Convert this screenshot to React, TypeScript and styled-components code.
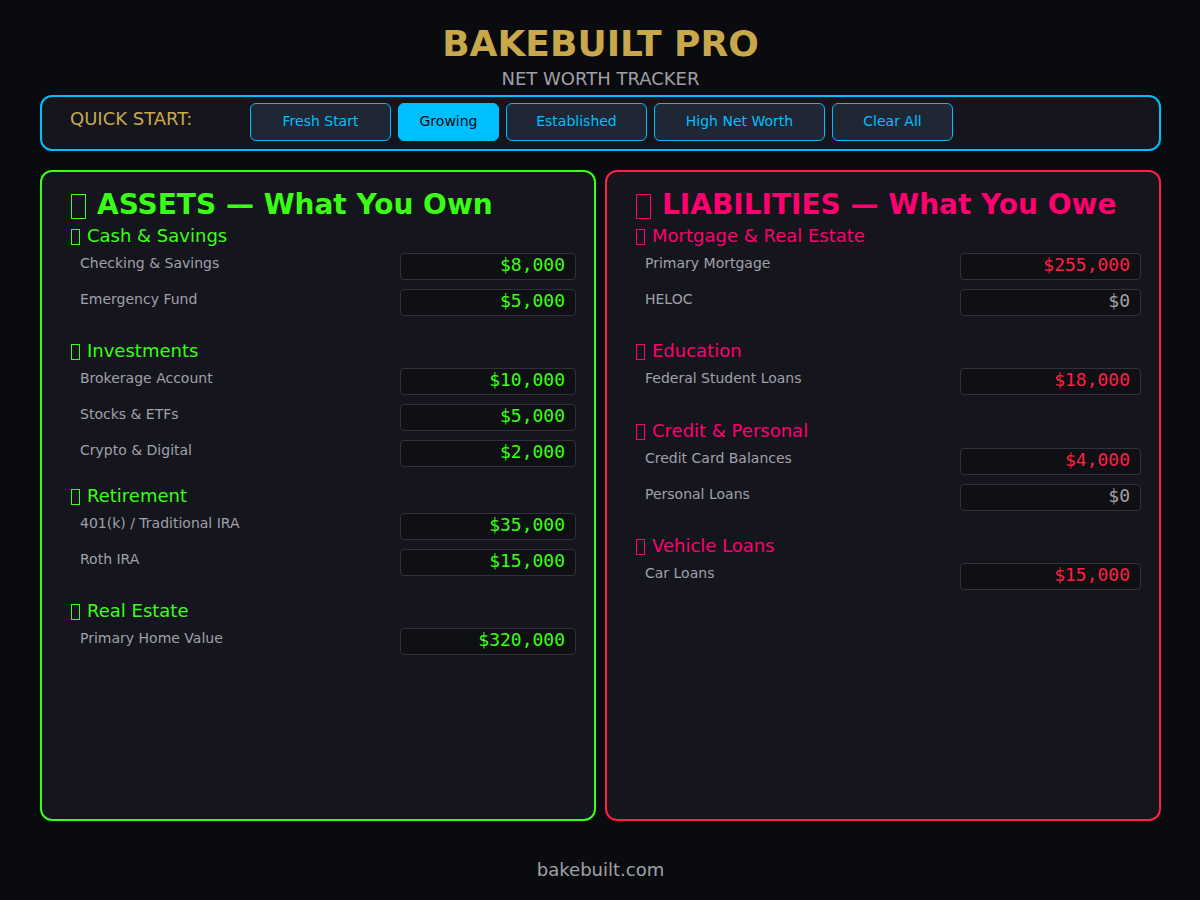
import React, { useState } from "react";
import styled, { createGlobalStyle } from "styled-components";

const GlobalStyle = createGlobalStyle`
  *, *::before, *::after { box-sizing: border-box; }
  body {
    margin: 0;
    background: #0a0b0e;
    color: #a0a0aa;
    font-family: "DejaVu Sans", sans-serif;
  }
`;

const Page = styled.div`
  display: flex;
  flex-direction: column;
  min-height: 100vh;
  padding: 20px 39px 18px 40px;
`;

const Header = styled.header`
  display: flex;
  flex-direction: column;
  align-items: center;
  padding-bottom: 6px;
`;

const Title = styled.h1`
  margin: 0;
  font-size: 36px;
  line-height: 48px;
  color: #c9a84c;
`;

const Subtitle = styled.p`
  margin: 0;
  font-size: 18px;
  line-height: 21px;
`;

const QuickBar = styled.nav`
  display: flex;
  align-items: flex-start;
  min-height: 56px;
  padding: 6px 28px;
  background: #15151e;
  border: 2px solid #00bfff;
  border-radius: 12px;
`;

const QuickLabel = styled.span`
  flex: 0 0 180px;
  font-size: 18px;
  line-height: 32px;
  color: #c9a84c;
`;

const QuickButtons = styled.div`
  display: flex;
  gap: 7px;
`;

const widths = { small: "101px", narrow: "121px", medium: "141px", large: "171px" };

const QuickButton = styled.button<{ $size: keyof typeof widths; $active: boolean }>`
  width: ${(p) => widths[p.$size]};
  height: 38px;
  padding: 0 0 2px;
  border: 1px solid #00bfff;
  border-radius: 6px;
  background: ${(p) => (p.$active ? "#00bfff" : "#1f2735")};
  color: ${(p) => (p.$active ? "#0a0b0e" : "#00bfff")};
  font-family: inherit;
  font-size: 14px;
  cursor: pointer;
`;

const Panels = styled.main`
  display: grid;
  grid-template-columns: 1fr 1fr;
  flex: 1;
  gap: 9px;
  margin-top: 19px;
`;

const Panel = styled.section<{ $border: string; $accent: string; $value: string }>`
  --accent: ${(p) => p.$accent};
  --value: ${(p) => p.$value};
  padding: 16px 18px 16px 28px;
  background: #15151e;
  border: 2px solid ${(p) => p.$border};
  border-radius: 12px;
`;

const PanelTitle = styled.h2`
  display: flex;
  margin: 0;
  font-size: 28px;
  line-height: 34px;
  white-space: nowrap;
  color: var(--accent);
`;

const groupGaps: Record<number, number> = { 1: 14, 2: 13, 3: 7 };

const Group = styled.fieldset<{ $rows: number }>`
  min-width: 0;
  margin: 0 0 ${(p) => groupGaps[p.$rows] ?? 7}px;
  padding: 0;
  border: 0;
`;

const GroupTitle = styled.legend`
  display: flex;
  padding: 2px 0 4px;
  font-size: 18px;
  line-height: 24px;
  color: var(--accent);
`;

const Glyph = styled.span<{ $large?: boolean }>`
  width: ${(p) => (p.$large ? 15 : 9)}px;
  height: ${(p) => (p.$large ? 25 : 16)}px;
  margin: ${(p) => (p.$large ? "6px 11px 0 1px" : "5px 7px 0 1px")};
  border: 1px solid currentColor;
`;

const Row = styled.div`
  display: flex;
  align-items: flex-start;
  justify-content: space-between;
  height: 36px;
  padding-left: 10px;
`;

const RowLabel = styled.label`
  font-size: 14px;
  line-height: 22px;
`;

const Amount = styled.input<{ $wide?: boolean; $empty: boolean }>`
  width: ${(p) => (p.$wide ? 181 : 176)}px;
  height: 27px;
  margin: 1px 0 0;
  padding: 0 10px 4px;
  border: 1px solid #31313c;
  border-radius: 4px;
  background: #0f1014;
  color: ${(p) => (p.$empty ? "#a0a0aa" : "var(--value)")};
  font-family: "DejaVu Sans Mono", monospace;
  font-size: 18px;
  text-align: right;
`;

const Footer = styled.footer`
  padding-top: 36px;
  font-size: 18px;
  line-height: 25px;
  text-align: center;
`;

const FooterLink = styled.a`
  color: inherit;
  text-decoration: none;
`;

type GroupData = { title: string; rows: [string, string][] };

const assets: GroupData[] = [
  { title: "Cash & Savings", rows: [["Checking & Savings", "$8,000"], ["Emergency Fund", "$5,000"]] },
  {
    title: "Investments",
    rows: [["Brokerage Account", "$10,000"], ["Stocks & ETFs", "$5,000"], ["Crypto & Digital", "$2,000"]],
  },
  { title: "Retirement", rows: [["401(k) / Traditional IRA", "$35,000"], ["Roth IRA", "$15,000"]] },
  { title: "Real Estate", rows: [["Primary Home Value", "$320,000"]] },
];

const liabilities: GroupData[] = [
  { title: "Mortgage & Real Estate", rows: [["Primary Mortgage", "$255,000"], ["HELOC", "$0"]] },
  { title: "Education", rows: [["Federal Student Loans", "$18,000"]] },
  { title: "Credit & Personal", rows: [["Credit Card Balances", "$4,000"], ["Personal Loans", "$0"]] },
  { title: "Vehicle Loans", rows: [["Car Loans", "$15,000"]] },
];

const presets: { name: string; size: keyof typeof widths }[] = [
  { name: "Fresh Start", size: "medium" },
  { name: "Growing", size: "small" },
  { name: "Established", size: "medium" },
  { name: "High Net Worth", size: "large" },
  { name: "Clear All", size: "narrow" },
];

function Groups({ groups, wide }: { groups: GroupData[]; wide?: boolean }) {
  return (
    <>
      {groups.map((group) => (
        <Group key={group.title} $rows={group.rows.length}>
          <GroupTitle>
            <Glyph aria-hidden="true" />
            {group.title}
          </GroupTitle>
          {group.rows.map(([label, value]) => {
            const id = label.toLowerCase().replace(/[^a-z0-9]+/g, "-");
            return (
              <Row key={id}>
                <RowLabel htmlFor={id}>{label}</RowLabel>
                <Amount id={id} defaultValue={value} $wide={wide} $empty={value === "$0"} />
              </Row>
            );
          })}
        </Group>
      ))}
    </>
  );
}

export default function App() {
  const [active, setActive] = useState("Growing");
  return (
    <>
      <GlobalStyle />
      <Page>
        <Header>
          <Title>BAKEBUILT PRO</Title>
          <Subtitle>NET WORTH TRACKER</Subtitle>
        </Header>
        <QuickBar aria-label="Quick start">
          <QuickLabel>QUICK START:</QuickLabel>
          <QuickButtons>
            {presets.map(({ name, size }) => (
              <QuickButton
                key={name}
                type="button"
                $size={size}
                $active={name === active}
                onClick={() => setActive(name)}
              >
                {name}
              </QuickButton>
            ))}
          </QuickButtons>
        </QuickBar>
        <Panels>
          <Panel $border="#39ff14" $accent="#39ff14" $value="#39ff14">
            <PanelTitle>
              <Glyph $large aria-hidden="true" />
              ASSETS — What You Own
            </PanelTitle>
            <Groups groups={assets} />
          </Panel>
          <Panel $border="#ff1f44" $accent="#ff006e" $value="#ff1f44">
            <PanelTitle>
              <Glyph $large aria-hidden="true" />
              LIABILITIES — What You Owe
            </PanelTitle>
            <Groups groups={liabilities} wide />
          </Panel>
        </Panels>
        <Footer>
          <FooterLink href="https://bakebuilt.com">bakebuilt.com</FooterLink>
        </Footer>
      </Page>
    </>
  );
}
